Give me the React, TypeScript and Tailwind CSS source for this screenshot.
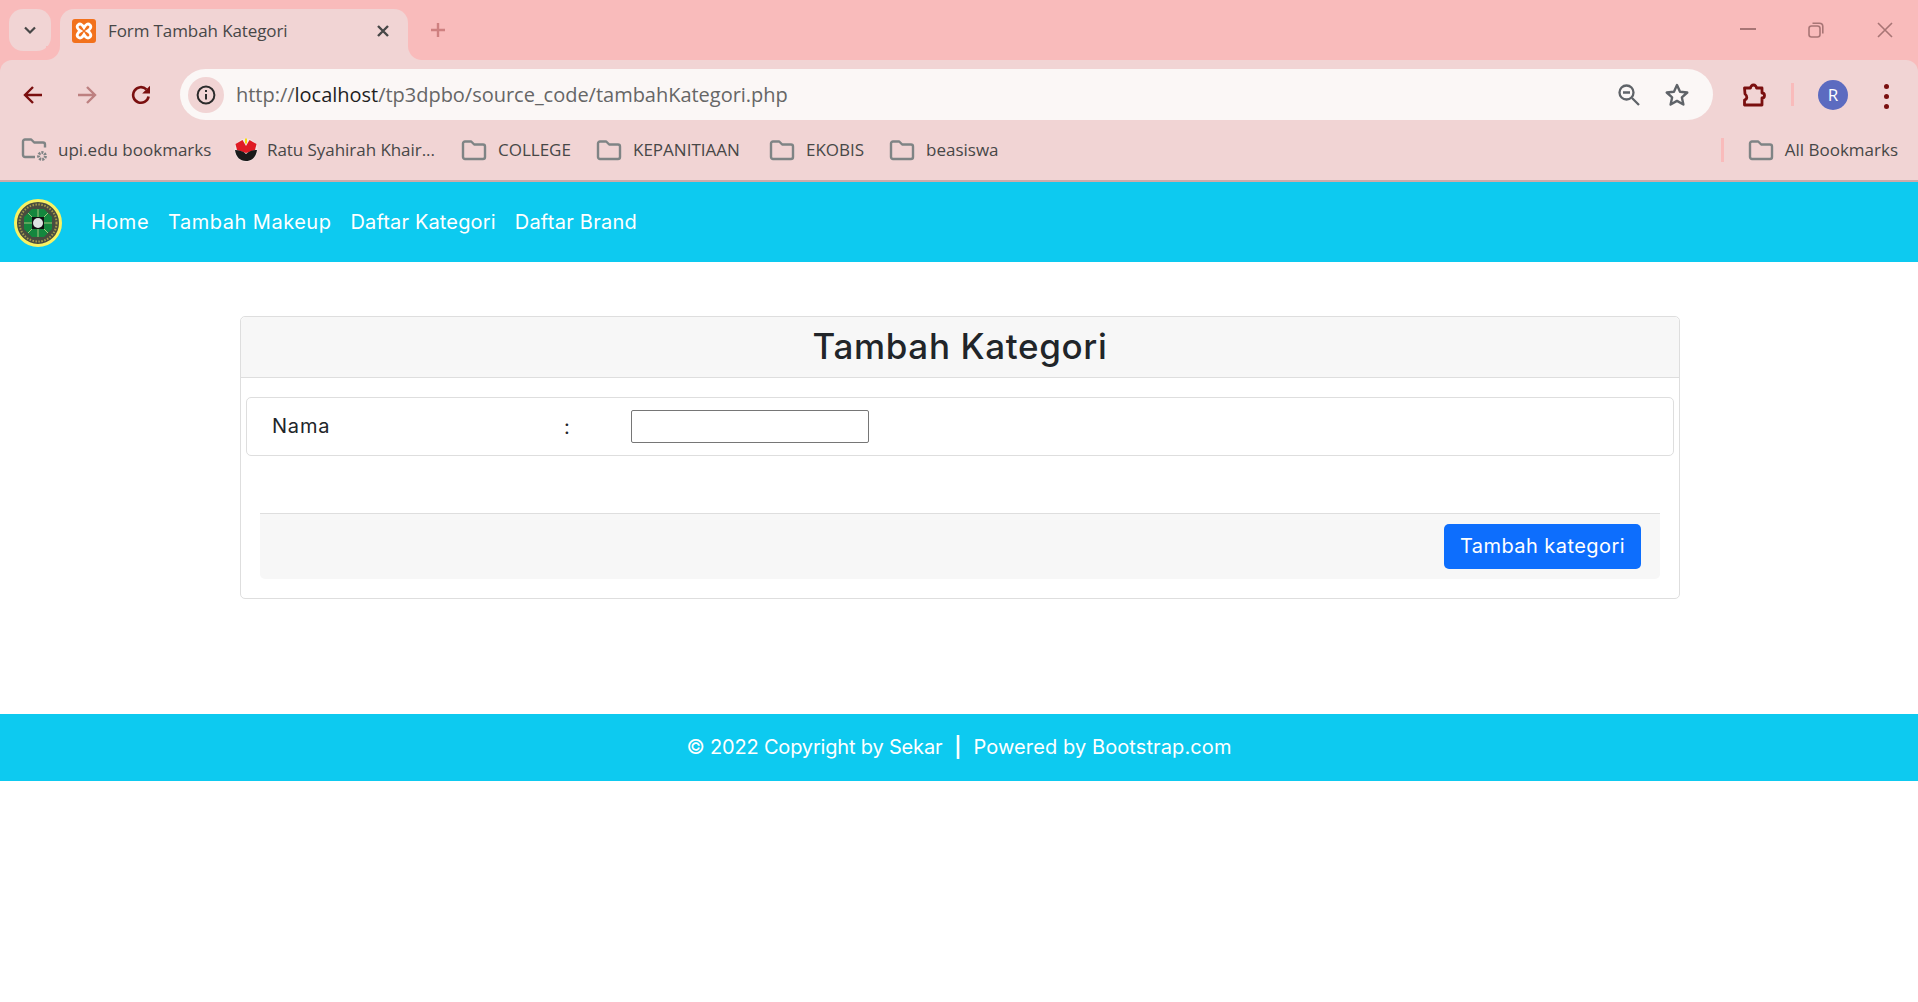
import React from "react";

const ui = "font-['Open_Sans','Noto_Sans',sans-serif]";
const web = "font-['Inter','Liberation_Sans',sans-serif]";

function Folder() {
  return (
    <svg width="26" height="22" viewBox="0 0 26 22" fill="none" stroke="#7f8485" strokeWidth="2.4" className="shrink-0">
      <path d="M2 4.5a2 2 0 0 1 2-2h6.2l3 3H22a2 2 0 0 1 2 2V18a2 2 0 0 1-2 2H4a2 2 0 0 1-2-2Z" strokeLinejoin="round" />
    </svg>
  );
}

function Xampp() {
  return (
    <svg width="24" height="24" viewBox="0 0 24 24" className="shrink-0">
      <rect width="24" height="24" rx="3" fill="#f2711c" />
      <path d="M6 6c2-2 4-1 6 2.5C14 5 16 4 18 6c2 2 0 4.500-2.500 6 2.500 1.500 4.500 4 2.500 6-2 2-4 1-6-2.500C10 19 8 20 6 18c-2-2 0-4.500 2.500-6C6 10.500 4 8 6 6Z" fill="none" stroke="#fff" strokeWidth="2.8" />
    </svg>
  );
}

function UpiLogo() {
  return (
    <svg width="24" height="24" viewBox="0 0 24 24" className="shrink-0">
      <circle cx="12" cy="12" r="11.500" fill="#f3e3e3" />
      <path d="M1.500 6l7-4 3.500 6 3.500-6 7 4-1.500 6-9 3-9-3Z" fill="#e01b24" />
      <path d="M1 12c4 0 8 1 11 4 3-3 7-4 11-4-1 7-5 11-11 11S2 19 1 12Z" fill="#1a1a1a" />
      <path d="M11 0.500h2v5h-2Z" fill="#f5d90a" />
    </svg>
  );
}

function Logo() {
  return (
    <svg width="48" height="48" viewBox="0 0 48 48" className="shrink-0 mt-[2px]">
      <circle cx="24" cy="24" r="22.500" fill="#494c3f" stroke="#f8f263" strokeWidth="3" />
      <circle cx="24" cy="24" r="18.500" fill="none" stroke="#a59a4c" strokeWidth="2" strokeDasharray="1.500 1.500" />
      <path d="M18 10h12l8 8v12l-8 8H18l-8-8V18Z" fill="#14873e" />
      <path d="M24 10v28M10 24h28M14 14l20 20M34 14L14 34" stroke="#cbd68a" strokeWidth="0.800" />
      <rect x="18" y="18" width="12" height="12" fill="#111" />
      <circle cx="24" cy="24" r="5" fill="#dfe3e3" />
    </svg>
  );
}

function Bookmark({ label, className, icon }: { label: string; className: string; icon?: React.ReactNode }) {
  return (
    <div className={`flex items-center shrink-0 ${className}`}>
      <div className="w-[37px] shrink-0 flex items-center">{icon ?? <Folder />}</div>
      <span className="text-[17px] text-[#474747] whitespace-nowrap">{label}</span>
    </div>
  );
}

function Browser() {
  return (
    <div className={`${ui} bg-[#f9bbbb]`}>
      {/* tab strip */}
      <div className="h-[60px] flex items-start pt-[9px] pl-[9px] pr-[25px]">
        <div className="w-[42px] h-[42px] rounded-[14px] bg-[#f1d4d4] flex items-center justify-center shrink-0">
          <svg width="16" height="16" viewBox="0 0 16 16" fill="none" stroke="#474747" strokeWidth="2.200"><path d="M3 5.500l5 5 5-5" /></svg>
        </div>
        <div className="relative ml-[9px] w-[348px] h-[51px] rounded-t-[14px] bg-[#f1d4d4] flex items-center pl-[12px] pr-[16px] pb-[7px] shrink-0">
          <div className="absolute left-[-14px] bottom-0 w-[14px] h-[14px] bg-[#f1d4d4]">
            <div className="w-full h-full bg-[#f9bbbb] rounded-br-[14px]" />
          </div>
          <div className="absolute right-[-14px] bottom-0 w-[14px] h-[14px] bg-[#f1d4d4]">
            <div className="w-full h-full bg-[#f9bbbb] rounded-bl-[14px]" />
          </div>
          <Xampp />
          <span className="ml-[12px] text-[17px] text-[#474747] whitespace-nowrap tracking-[-0.1px]">Form Tambah Kategori</span>
          <svg width="14" height="14" viewBox="0 0 14 14" className="ml-auto mr-[2px]" stroke="#474747" strokeWidth="2.400"><path d="M2 2l10 10M12 2L2 12" /></svg>
        </div>
        <svg width="16" height="16" viewBox="0 0 16 16" className="ml-[22px] mt-[13px]" stroke="#cf8080" strokeWidth="2.400"><path d="M8 1v14M1 8h14" /></svg>
        <svg width="16" height="2" viewBox="0 0 16 2" className="ml-auto mt-[19px]"><rect width="16" height="2" fill="#a87575" /></svg>
        <svg width="16" height="16" viewBox="0 0 16 16" fill="none" stroke="#a87575" strokeWidth="1.600" className="ml-[52px] mt-[13px]"><rect x="1" y="4" width="11" height="11" rx="2.500" /><path d="M4.500 1.200h7a3.300 3.300 0 0 1 3.300 3.300v7" /></svg>
        <svg width="16" height="16" viewBox="0 0 16 16" stroke="#a87575" strokeWidth="1.600" className="ml-[53px] mt-[13px]"><path d="M1 1l14 14M15 1L1 15" /></svg>
      </div>
      {/* toolbar */}
      <div className="h-[60px] bg-[#f1d4d4] rounded-t-[12px] flex items-start pt-[9px] pl-[23px] pr-[24px]">
        <svg width="20" height="20" viewBox="0 0 20 20" fill="none" stroke="#7a0f0f" strokeWidth="2.400" className="mt-[16px]"><path d="M19 10H2M10 2l-8 8 8 8" /></svg>
        <svg width="20" height="20" viewBox="0 0 20 20" fill="none" stroke="#bd8080" strokeWidth="2.400" className="ml-[34px] mt-[16px]"><path d="M1 10h17M10 2l8 8-8 8" /></svg>
        <svg width="20" height="20" viewBox="0 0 20 20" fill="none" className="ml-[34px] mt-[16px]"><path d="M17.600 11.500A7.800 7.800 0 1 1 15.400 4.400" stroke="#7a0f0f" strokeWidth="2.600" /><path d="M19 0.800V8.600h-7.800Z" fill="#7a0f0f" /></svg>
        <div className="ml-[29px] w-[1533px] h-[51px] rounded-full bg-[#fbf7f6] flex items-center pl-[8px] pr-[18px] shrink-0">
          <div className="w-[36px] h-[36px] rounded-full bg-[#f1d4d4] flex items-center justify-center shrink-0">
            <svg width="20" height="20" viewBox="0 0 20 20" fill="none" stroke="#2b2b2b" strokeWidth="2"><circle cx="10" cy="10" r="8.400" /><path d="M10 9v5.500M10 5v2" /></svg>
          </div>
          <span className="ml-[12px] text-[20px] text-[#666] whitespace-nowrap tracking-[-0.02px]">
            http://<span className="text-[#1f1f1f]">localhost</span>/tp3dpbo/source_code/tambahKategori.php
          </span>
          <svg width="24" height="24" viewBox="0 0 24 24" fill="none" stroke="#5f6368" strokeWidth="2.300" className="ml-auto mr-[-1px]"><circle cx="9.500" cy="9.500" r="7" /><path d="M15 15l7 7M6 9.500h7" /></svg>
          <svg width="26" height="26" viewBox="0 0 24 24" fill="none" stroke="#5f6368" strokeWidth="2.200" className="ml-[24px] mr-[5px]"><path d="M12 2.800l2.800 6.200 6.700.7-5 4.500 1.400 6.600L12 17.400l-5.900 3.400 1.400-6.600-5-4.500 6.700-.7Z" strokeLinejoin="round" /></svg>
        </div>
        <svg width="26" height="26" viewBox="0 0 26 26" fill="none" stroke="#7a0f0f" strokeWidth="2.800" className="ml-[28px] mt-[13px] shrink-0"><path d="M3.500 6h6a3 3 0 0 1 6 0H21v5a2.400 2.400 0 0 1 0 5v7H3.500v-5c3-1 3-4 .5-6Z" strokeLinejoin="round" /></svg>
        <div className="ml-[24px] mt-[14px] w-[3px] h-[23px] bg-[#f9bbbb] shrink-0" />
        <div className="ml-[24px] mt-[11px] w-[30px] h-[30px] rounded-full bg-[#5c6bc0] text-white text-[17px] flex items-center justify-center shrink-0">R</div>
        <div className="ml-[36px] mt-[15px] flex flex-col gap-[5px] shrink-0">
          <div className="w-[5px] h-[5px] rounded-full bg-[#7a0f0f]" />
          <div className="w-[5px] h-[5px] rounded-full bg-[#7a0f0f]" />
          <div className="w-[5px] h-[5px] rounded-full bg-[#7a0f0f]" />
        </div>
      </div>
      {/* bookmarks */}
      <div className="h-[62px] bg-[#f1d4d4] border-b-2 border-[#cfa9a9] flex items-center pl-[21px] pr-[20px]">
        <Bookmark
          className="w-[213px]"
          label="upi.edu bookmarks"
          icon={
            <svg width="27" height="26" viewBox="0 0 27 26" fill="none" stroke="#7f8485" strokeWidth="2.400" className="mr-[-1px]">
              <path d="M14 20H4a2 2 0 0 1-2-2V4.500a2 2 0 0 1 2-2h6.200l3 3H22a2 2 0 0 1 2 2v3" strokeLinejoin="round" />
              <circle cx="21" cy="19" r="3.400" strokeWidth="3" strokeDasharray="2 1" />
            </svg>
          }
        />
        <div className="flex items-center shrink-0 w-[227px]">
          <div className="w-[33px] shrink-0 flex items-center"><UpiLogo /></div>
          <span className="text-[17px] text-[#474747] whitespace-nowrap tracking-[-0.05px]">Ratu Syahirah Khair...</span>
        </div>
        <Bookmark className="w-[135px]" label="COLLEGE" />
        <Bookmark className="w-[173px]" label="KEPANITIAAN" />
        <Bookmark className="w-[120px]" label="EKOBIS" />
        <Bookmark className="w-[120px]" label="beasiswa" />
        <div className="ml-auto w-[3px] h-[24px] bg-[#f9bbbb] mr-[24px]" />
        <Bookmark className="" label="All Bookmarks" />
      </div>
    </div>
  );
}

export default function App() {
  return (
    <div className={`min-h-[1002px] bg-white ${web}`}>
      <Browser />
      <nav className="h-[80px] bg-[#0dcaf0] flex items-center pl-[14px]">
        <Logo />
        <div className="ml-[29px] flex gap-[19px] text-[20px] text-white">
          <span className="tracking-[0.5px]">Home</span>
          <span className="tracking-[0.5px]">Tambah Makeup</span>
          <span className="tracking-[0.15px]">Daftar Kategori</span>
          <span className="tracking-[0.25px]">Daftar Brand</span>
        </div>
      </nav>
      <main className="pt-[54px] pb-[115px] pl-[240px] pr-[238px]">
        <div className="h-[283px] border border-[#dedede] rounded-[5px] flex flex-col">
          <div className="h-[61px] shrink-0 bg-[#f7f7f7] border-b border-[#dedede] rounded-t-[5px] flex items-center justify-center pb-[1px] text-[35px] text-[#212529] font-medium tracking-[0.65px]">
            Tambah Kategori
          </div>
          <div className="mt-[19px] mx-[5px] h-[59px] border border-[#dedede] rounded-[5px] flex items-center pl-[25px] text-[20px] text-[#212529]">
            <span className="w-[292px] pb-[2px] tracking-[0.8px]">Nama</span>
            <span className="w-[67px]">:</span>
            <div className="w-[238px] h-[33px] border border-[#767676] rounded-[2px] bg-white" />
          </div>
          <div className="mt-[57px] ml-[19px] mr-[19px] h-[66px] bg-[#f7f7f7] border-t border-[#dedede] rounded-b-[5px] flex items-center justify-end pr-[19px]">
            <button className="w-[197px] h-[45px] pb-[2px] bg-[#0d6efd] text-white text-[20px] rounded-[5px] tracking-[0.45px]">Tambah kategori</button>
          </div>
        </div>
      </main>
      <footer className="h-[67px] pb-[2px] bg-[#0dcaf0] text-white text-[20px] flex items-center justify-center gap-[12px] whitespace-nowrap">
        <span className="tracking-[-0.18px]">© 2022 Copyright by Sekar</span>
        <span className="font-semibold">|</span>
        <span className="tracking-[0.1px]">Powered by Bootstrap.com</span>
      </footer>
    </div>
  );
}
